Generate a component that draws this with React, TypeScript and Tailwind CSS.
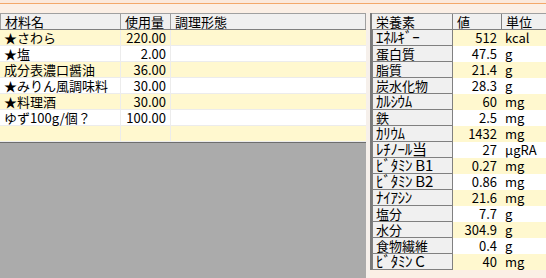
const ingredients = [
  { name: "★さわら", qty: "220.00" },
  { name: "★塩", qty: "2.00" },
  { name: "成分表濃口醤油", qty: "36.00" },
  { name: "★みりん風調味料", qty: "30.00" },
  { name: "★料理酒", qty: "30.00" },
  { name: "ゆず100g/個？", qty: "100.00" },
  { name: "", qty: "" },
];

const nutrients = [
  { label: "ｴﾈﾙｷﾞｰ", value: "512", unit: "kcal" },
  { label: "蛋白質", value: "47.5", unit: "g" },
  { label: "脂質", value: "21.4", unit: "g" },
  { label: "炭水化物", value: "28.3", unit: "g" },
  { label: "ｶﾙｼｳﾑ", value: "60", unit: "mg" },
  { label: "鉄", value: "2.5", unit: "mg" },
  { label: "ｶﾘｳﾑ", value: "1432", unit: "mg" },
  { label: "ﾚﾁﾉｰﾙ当", value: "27", unit: "μgRA" },
  { label: "ﾋﾞﾀﾐﾝ B1", value: "0.27", unit: "mg" },
  { label: "ﾋﾞﾀﾐﾝ B2", value: "0.86", unit: "mg" },
  { label: "ﾅｲｱｼﾝ", value: "21.6", unit: "mg" },
  { label: "塩分", value: "7.7", unit: "g" },
  { label: "水分", value: "304.9", unit: "g" },
  { label: "食物繊維", value: "0.4", unit: "g" },
  { label: "ﾋﾞﾀﾐﾝ C", value: "40", unit: "mg" },
];

const halfWidth = /[\uFF61-\uFF9F]/;

export default function App() {
  return (
    <div
      className="w-[546px] h-[278px] overflow-hidden bg-[#fbefe5] text-[13px] leading-[16px] text-black"
      style={{ fontFamily: '"Noto Sans CJK JP", "Liberation Sans", sans-serif' }}
    >
      {/* top strip */}
      <div className="h-[3px] bg-[#fbe9dc]" />
      <div className="h-px bg-[#f3a86a]" />
      <div className="h-[9px] bg-[#fbefe5]" />

      <div className="flex h-[265px]">
        {/* ingredients table */}
        <div className="w-[366px] flex flex-col bg-[#ababab]">
          <div className="flex h-[17px] bg-[#f0f0f0] border-t border-[#a0a0a0] border-b border-b-[#808080]">
            <div className="w-[121px] pl-1 flex items-center border-l border-[#a0a0a0] border-r border-r-[#a0a0a0]">材料名</div>
            <div className="w-[50px] pl-1 flex items-center border-r border-[#a0a0a0]">使用量</div>
            <div className="flex-1 pl-1 flex items-center border-r border-[#a0a0a0]">調理形態</div>
          </div>
          {ingredients.map((r, i) => (
            <div
              key={i}
              className={`flex h-[16px] border-b border-[#ececec] ${i % 2 === 0 ? "bg-[#fff8cf]" : "bg-white"}`}
            >
              <div className="w-[121px] pl-1 flex items-center border-r border-[#ececec]">{r.name}</div>
              <div className="w-[50px] pr-1 flex items-center justify-end border-r border-[#ececec]">{r.qty}</div>
              <div className="flex-1" />
            </div>
          ))}
          <div className="h-px bg-[#6e6e6e]" />
          <div className="flex-1 bg-[#ababab]" />
        </div>

        <div className="w-[4px] bg-[#f6f0eb]" />

        {/* nutrients table */}
        <div className="flex-1 flex flex-col">
          <div className="border-l-2 border-[#7a7a7a] bg-white">
            <div className="flex h-[17px] bg-[#f0f0f0] border-t border-[#a0a0a0] border-b border-b-[#808080]">
              <div className="w-[81px] pl-1 flex items-center border-r border-[#808080]">栄養素</div>
              <div className="w-[49px] pl-1 flex items-center border-r border-[#808080]">値</div>
              <div className="flex-1 pl-1 flex items-center">単位</div>
            </div>
            {nutrients.map((r, i) => (
              <div
                key={r.label}
                className={`flex h-[16px] ${i % 2 === 0 ? "bg-[#fff8cf]" : "bg-white"}`}
              >
                <div className="w-[81px] pl-[3px] flex items-center bg-[#f0f0f0] border border-[#808080] border-t-0">
                  <span className={halfWidth.test(r.label) ? "text-[15px] leading-[14px] tracking-[-0.3px] -mt-px" : ""}>{r.label}</span>
                </div>
                <div className="w-[49px] pr-[5px] flex items-center justify-end">{r.value}</div>
                <div className="flex-1 pl-[3px] flex items-center">{r.unit}</div>
              </div>
            ))}
          </div>
          <div className="flex-1 bg-[#fbefe5]" />
        </div>
      </div>
    </div>
  );
}
